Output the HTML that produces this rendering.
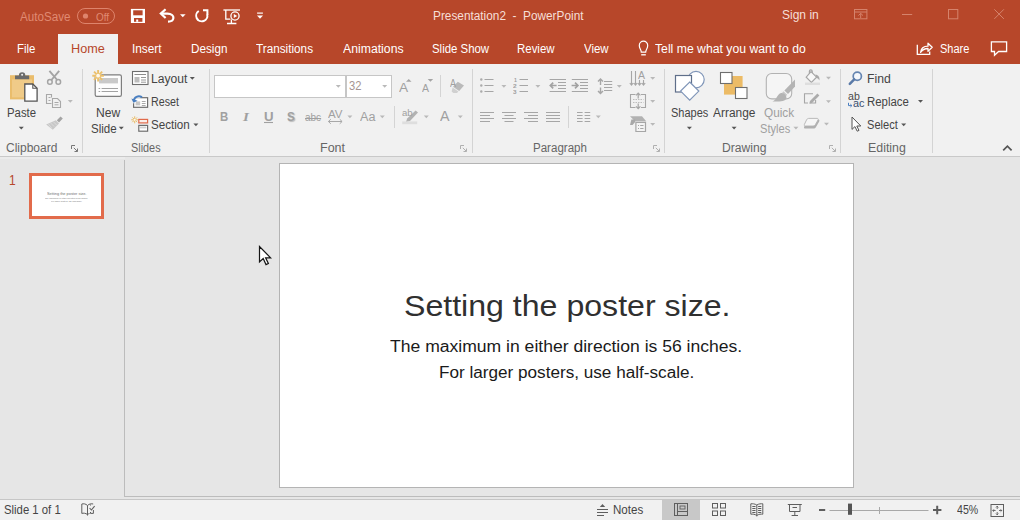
<!DOCTYPE html>
<html lang="en">
<head>
<meta charset="utf-8">
<title>Presentation2 - PowerPoint</title>
<style>
*{box-sizing:border-box;margin:0;padding:0}
html,body{width:1020px;height:520px;overflow:hidden;background:#e6e6e6}
body{position:relative;font-family:"Liberation Sans",sans-serif;font-size:12px;color:#444;line-height:1}
.abs,.t,svg{position:absolute}
svg{overflow:visible}
.t{white-space:nowrap;display:block}
#titlebar{position:absolute;left:0;top:0;width:1020px;height:64px;background:#b7472a}
#hometab{position:absolute;left:58px;top:34px;width:60px;height:30px;background:#f1f1f1}
#ribbon{position:absolute;left:0;top:64px;width:1020px;height:93px;background:#f1f1f1;border-bottom:1px solid #c9c9c9}
.w{color:#fff}
.ttl{color:#f6dfd8}
.dim{color:#e08a72}
.hm{color:#b7472a}
.g{color:#a0a0a0}
.g32{color:#a59492}
.rp{color:#4a4a4a}
.rp2{color:#3a4f6e}
.lbl{color:#666}
.st{color:#303030}
.th{color:#707070}
.sb{color:#1a1a1a}
.vsep{position:absolute;width:1px;background:#d4d4d4}
.arr{position:absolute;width:0;height:0;border-left:3px solid transparent;border-right:3px solid transparent;border-top:3px solid #666}
.arr.ga{border-top-color:#b9b9b9}
.box{position:absolute;background:#fff;border:1px solid #c6c6c6}
#leftpanel{position:absolute;left:0;top:160px;width:125px;height:337px;background:#e6e6e6;border-right:1px solid #bcbcbc}
#work{position:absolute;left:125px;top:157px;width:895px;height:340px;background:#e6e6e6;border-bottom:1px solid #bcbcbc}
#slide{position:absolute;left:279px;top:163px;width:575px;height:325px;background:#fff;border:1px solid #b4b4b4}
#thumb{position:absolute;left:29px;top:173px;width:75px;height:46px;background:#fff;border:3px solid #e26b4b}
#status{position:absolute;left:0;top:499px;width:1020px;height:21px;background:#f1f1f1;border-top:1px solid #c6c6c6}
#viewsel{position:absolute;left:662px;top:500px;width:38px;height:20px;background:#c8c8c8}
</style>
</head>
<body>
<div id="titlebar"></div>
<div id="hometab"></div>
<div id="ribbon"></div>
<div class="abs" style="left:0;top:157px;width:1020px;height:2px;background:#ebebeb"></div>
<div id="leftpanel"></div>
<div id="work"></div>
<div id="slide"></div>
<div id="thumb"></div>
<div id="status"></div>
<div id="viewsel"></div>
<!-- separators & boxes -->
<div class="vsep" style="left:82px;top:69px;height:84px"></div>
<div class="vsep" style="left:209px;top:69px;height:84px"></div>
<div class="vsep" style="left:472px;top:69px;height:84px"></div>
<div class="vsep" style="left:664px;top:69px;height:84px"></div>
<div class="vsep" style="left:840px;top:69px;height:84px"></div>
<div class="vsep" style="left:932px;top:69px;height:84px"></div>
<div class="vsep" style="left:440px;top:75px;height:22px"></div>
<div class="vsep" style="left:394px;top:106px;height:22px"></div>
<div class="vsep" style="left:568px;top:106px;height:22px"></div>
<div class="box" style="left:214px;top:75px;width:132px;height:23px"></div>
<div class="box" style="left:346px;top:75px;width:46px;height:23px"></div>

<svg id="ic" width="1020" height="520" viewBox="0 0 1020 520" style="left:0;top:0" fill="none" stroke-linecap="butt">
<!-- ===== title bar ===== -->
<g stroke="#de846c" stroke-width="1">
<rect x="77.5" y="8.5" width="37" height="15" rx="7.5"/>
<circle cx="85.5" cy="16" r="2.6" fill="#de846c" stroke="none"/>
</g>
<!-- save -->
<path fill="#fff" d="M130.9,8.900h14.100v14.100h-14.100z"/>
<rect x="133.2" y="10.300" width="9.400" height="5" fill="#b7472a"/>
<rect x="134" y="18" width="8.400" height="3.800" fill="#b7472a"/>
<rect x="136.2" y="19.500" width="2" height="2.300" fill="#fff"/>
<!-- undo -->
<g stroke="#fff" stroke-width="2.200" stroke-linejoin="miter">
<path d="M165.6,9.200 L160.800,13.600 L165.600,18"/>
<path d="M161.4,13.600 H167.400 C171.600,13.600 173.600,15.800 173.400,18 C173.200,20.400 171,21.600 168,21.600"/>
</g>
<path fill="#fff" d="M180,14.2h5.6l-2.8,3z"/>
<!-- repeat -->
<g stroke="#fff" stroke-width="2">
<path d="M198.800,11 A5.600,5.600 0 1 0 207.200,14.400"/>
<path d="M203,10.300 H207.400 V15" stroke-linejoin="miter"/>
</g>
<!-- start presentation -->
<g stroke="#fff" stroke-width="1.3">
<path d="M223.4,10H240"/>
<path d="M225.8,10V19.2H230.4"/>
<circle cx="235" cy="16" r="4.1"/>
<path d="M231.4,19.4V23.2M227,23.5H236.4"/>
<path d="M233.8,13.9L237.2,16L233.8,18.1Z" fill="#fff" stroke="none"/>
</g>
<!-- customize qat -->
<path d="M257.1,13.1H262.9" stroke="#fff" stroke-width="1.2"/>
<path fill="#fff" d="M257,15.5h6l-3,3.3z"/>
<!-- window controls -->
<g stroke="#d5836c" stroke-width="1">
<rect x="854.5" y="9.500" width="12.400" height="9.300"/>
<path d="M854.5,12H866.900M860.700,18V13.400M858.400,15.600L860.700,13.300L863,15.600"/>
<path d="M902,14.500H912.200"/>
<rect x="948.5" y="9.500" width="9.300" height="9.300"/>
<path d="M994.3,9.300L1003.900,18.900M1003.900,9.300L994.300,18.900"/>
</g>
<!-- lightbulb -->
<g stroke="#fff" stroke-width="1.2">
<path d="M641.3,52.2 C641.3,49.600 639.300,48.600 639.300,45.400 A4.200,4.200 0 0 1 647.700,45.400 C647.700,48.600 645.700,49.600 645.700,52.200 Z"/>
<path d="M641.2,54.800H645.800" stroke-width="1.300"/>
</g>
<!-- share -->
<g stroke="#fff" stroke-width="1.3">
<path d="M917.3,44.800V54.400H929.700V51.400"/>
<path d="M920.6,52.400 C921,48.200 923.800,46.200 928,46.200 V43.200 L932.200,47.300 L928,51.400 V48.500 C925,48.500 922.600,49.300 920.600,52.400Z" stroke-linejoin="round" transform="translate(0,0)"/>
</g>
<!-- comment -->
<path d="M991.4,41.800H1006.600V51.500H998.600L994.500,55.200V51.500H991.400Z" stroke="#fff" stroke-width="1.300"/>
<!-- ===== ribbon: clipboard ===== -->
<!-- paste -->
<path fill="#eabd6c" d="M10,75.2h24v24.2h-24z"/>
<path fill="#f0cb88" d="M12,79.4h20v18h-20z"/>
<path fill="#6b6b6b" d="M15,79.200v-3.800h3.900a3.200,3.200 0 0 1 6.400,0h3.900v3.800z"/>
<circle cx="22.100" cy="74.700" r="1" fill="#f1f1f1"/>
<path fill="#fff" stroke="#555" stroke-width="1.3" d="M24.8,84h8l4.3,4.3v12.8h-12.3z"/>
<path stroke="#555" stroke-width="1.1" d="M32.8,84v4.3h4.3"/>
<path fill="#555" d="M18.8,126.8h5l-2.5,2.8z"/>
<!-- cut -->
<g stroke="#a4a4a4" stroke-width="1.5">
<path d="M49.4,70.8L57.2,80M59.2,70.8L51.4,80" stroke-width="1.9"/>
<circle cx="49.9" cy="81.9" r="2.3"/><circle cx="58.3" cy="81.9" r="2.3"/>
</g>
<!-- copy -->
<g stroke="#a8a8a8" stroke-width="1.1">
<path d="M51.5,97.5V94.5H46.5V103.5H51.5" />
<path d="M48.5,97.5H50.5M48.5,100.5H50.5" stroke-width="1"/>
<path fill="#f1f1f1" d="M52.5,98.5h5l3,3v6h-8z"/>
<path d="M54.5,102.5H58.5M54.5,104.8H58.5" stroke-width="1"/>
</g>
<path fill="#b9b9b9" d="M67.8,100.0h5l-2.5,2.8z"/>
<!-- format painter -->
<path d="M60.6,116.400l2.200,2.200l-3.800,3.800l-2.200,-2.200z" fill="#a4a4a4"/>
<path d="M55.8,120.200l3.200,3.200l-6.200,6.400l-6.600,-5.400z" fill="#c8c8c8"/>
<path d="M53.4,121.800l3.200,3.200M50.600,123l3.600,3.600M48.400,124l3.400,4.200" stroke="#dedede" stroke-width="0.800"/>
<!-- launcher clipboard -->
<g id="ln1" stroke="#777" stroke-width="1">
<path d="M71.5,149V145.5H75"/>
<path d="M73.8,147.8L77.3,151.3M77.5,148.5V151.5H74.5"/>
</g>
<!-- new slide -->
<rect x="95.2" y="74.900" width="26.200" height="21.400" rx="1.600" fill="#fdfdfd" stroke="#7e7e7e" stroke-width="1.200"/>
<rect x="99" y="78" width="19" height="5.400" fill="#c9c9c9"/>
<path d="M98.6,88.500H100.200M101.600,88.500H118M98.600,91.500H100.200M101.600,91.500H118" stroke="#a2a2a2" stroke-width="1"/>
<circle cx="98.1" cy="75.700" r="3.400" fill="#f1f1f1"/>
<g stroke="#ebc06c" stroke-width="1.900">
<path d="M98.1,69.900V81.500M92.300,75.700H103.900M94,71.600L102.200,79.800M102.200,71.600L94,79.800"/>
</g>
<circle cx="98.1" cy="75.700" r="1.900" fill="#fdf8ec"/>
<path fill="#555" d="M118.8,126.800h5l-2.500,2.800z"/>
<!-- layout -->
<rect x="132.5" y="71.5" width="15.5" height="13" fill="#fff" stroke="#6e6e6e" stroke-width="1.1"/>
<path d="M134.5,74.5H146" stroke="#8c8c8c"/>
<rect x="134.5" y="77" width="5" height="5.5" fill="#bdbdbd"/>
<path d="M141,77.5H146M141,80H146M141,82.2H146" stroke="#8c8c8c" stroke-width=".9"/>
<path fill="#555" d="M189.8,77.0h5l-2.5,2.8z"/>
<!-- reset -->
<rect x="133.6" y="97.700" width="14" height="9.600" fill="#fff" stroke="#6e6e6e" stroke-width="1.200"/>
<rect x="135.6" y="101.400" width="4.600" height="4" fill="#c6c6c6"/>
<path d="M141.8,101.500H145.600M141.800,103.500H145.600M141.800,105.500H145.600" stroke="#a0a0a0" stroke-width=".9"/>
<path d="M131,95h9.500v3.600h-4.500v4.600h-5z" fill="#f1f1f1"/>
<path d="M133.800,100.800C134,97 138.200,95.200 142,97.200" stroke="#4a7fc0" stroke-width="2"/>
<path d="M131.400,98.600L133.400,102.800L137.600,100.800Z" fill="#4a7fc0"/>
<!-- section -->
<g stroke="#e9bc66" stroke-width="1"><path d="M134.700,116.300V123.300M131.200,119.800H138.200M132.300,117.400L137.100,122.200M137.100,117.400L132.300,122.200"/></g><circle cx="134.700" cy="119.800" r="1.100" fill="#fdf8ec"/>
<rect x="138.8" y="119.400" width="8.800" height="3.500" stroke="#e06a4a" stroke-width="1.200" fill="#fbeee9"/>
<rect x="138.8" y="125.400" width="8.800" height="5.800" stroke="#6e6e6e" stroke-width="1.200" fill="#fff"/><rect x="140" y="126.600" width="6.400" height="1.800" fill="#cfcfcf"/>
<path fill="#555" d="M193.400,123.400h5l-2.500,2.800z"/>
<!-- ===== font group ===== -->
<path fill="#b9b9b9" d="M335.8,85.0h5l-2.5,2.8z"/>
<path fill="#b9b9b9" d="M382.2,85.0h5l-2.5,2.8z"/>
<path fill="#a4a4a4" d="M406,81.700l2.750,-2.800l2.750,2.800z"/>
<path fill="#a4a4a4" d="M427.700,79l2.750,2.800l2.750,-2.800z"/>
<!-- clear formatting -->
<path d="M457.8,81.700l6.200,3.800l-4.800,5.600l-6.200,-4.300z" fill="#bababa"/>
<path d="M452.6,87.600l5.800,4l-1.400,1.400h-3.600l-1.800,-1.400z" fill="#d0d0d0"/>
<!-- U underline, AV arrow -->
<path d="M264,122.5H273" stroke="#a0a0a0" stroke-width="1.1"/>
<path d="M328.5,121.5H342M330.8,119.2L328.4,121.5L330.8,123.8M339.7,119.2L342.1,121.5L339.7,123.8" stroke="#a8a8a8" stroke-width="1"/>
<path fill="#b9b9b9" d="M347.4,115.5h5l-2.5,2.8z"/>
<path fill="#b9b9b9" d="M379.8,115.5h5l-2.5,2.8z"/>
<!-- highlight -->
<path d="M415.6,110.600l2.400,2l-8,8.400l-4,1l1.200,-3.600z" fill="#b2b2b2"/>
<rect x="402.2" y="121.400" width="15" height="2.800" fill="#dedede"/>
<path fill="#b9b9b9" d="M423.8,115.5h5l-2.5,2.8z"/>
<path fill="#b9b9b9" d="M457.8,115.5h5l-2.5,2.8z"/>
<g stroke="#b0b0b0" stroke-width="1">
<path d="M460.5,149V145.5H464"/>
<path d="M462.8,147.8L466.3,151.3M466.5,148.5V151.5H463.5"/>
</g>
<!-- ===== paragraph group ===== -->
<g stroke="#a6a6a6" stroke-width="1.1">
<!-- bullets -->
<path d="M484.5,79.5H493.5M484.5,85.5H493.5M484.5,91.5H493.5"/>
<g fill="#ababab" stroke="none"><circle cx="481.3" cy="79.5" r="1.2"/><circle cx="481.3" cy="85.5" r="1.2"/><circle cx="481.3" cy="91.5" r="1.2"/></g>
<!-- numbering lines -->
<path d="M519.5,79.5H528M519.5,85.5H528M519.5,91.5H528"/>
<!-- decrease indent -->
<path d="M549.6,79.5H566M549.6,91.5H566M558,82.5H566M558,85.5H566M558,88.5H566"/>
<path d="M550.4,85.5H556.6M553.2,82.600L550.300,85.500L553.200,88.400" stroke-width="1.7" stroke="#a2a2a2"/>
<!-- increase indent -->
<path d="M571.8,79.5H588M571.8,91.5H588M580,82.5H588M580,85.5H588M580,88.5H588"/>
<path d="M571.6,85.500H577.800M575,82.600L577.900,85.500L575,88.400" stroke-width="1.7" stroke="#a2a2a2"/>
<!-- line spacing -->
<path d="M604,81.500H612.200M604,84.500H612.200M604,87.500H612.200M604,90.500H612.200"/>
<path d="M600.5,79V85M600.500,87.600V93.600M598,81.600L600.500,79L603,81.600M598,91L600.500,93.600L603,91" stroke-width="1.400"/>
<!-- align rows -->
<path d="M480,112.5H494M480,115.5H490M480,118.5H494M480,121.5H490"/>
<path d="M502,112.5H516M504.5,115.5H513.5M502,118.5H516M504.5,121.5H513.5"/>
<path d="M524,112.5H538M528,115.5H538M524,118.5H538M528,121.5H538"/>
<path d="M546,112.5H560M546,115.5H560M546,118.5H560M546,121.5H560"/>
<!-- columns -->
<path d="M577,112.5H582.6M577,115.5H582.6M577,118.5H582.6M577,121.5H582.6M584.6,112.5H590.2M584.6,115.5H590.2M584.6,118.5H590.2M584.6,121.5H590.2"/>
<!-- text direction -->
<path d="M631.5,71V85M635.5,71V85M629.8,83L631.5,85.2L633.2,83M633.8,83L635.5,85.2L637.2,83"/>
<path d="M639.5,80V85M643.5,80V85M637.8,83L639.5,85.2L641.2,83M641.8,83L643.5,85.2L645.2,83"/>
<!-- align text -->
<path d="M635.5,94.500H630.500V107.500H635.500M641,94.500H645.500V107.500H641"/>
<path d="M638.2,93.200V98.400M636,95.400L638.200,93.200L640.400,95.400M638.200,103.400V108.600M636,106.400L638.200,108.600L640.400,106.400" stroke-width="1.200"/>
<path d="M633,99.500H643.500M633,102.500H643.500" stroke-dasharray="1.500 1" stroke="#bdbdbd"/>
<!-- smartart -->
<path d="M635.9,122.300H645.500V131.500H635.900Z" fill="#f4f4f4" stroke-width="1.200"/>
<path d="M638,125.500H639M640.200,125.500H643.500M638,128.500H639M640.200,128.500H643.500" />
</g>
<path d="M630,116.200h12l4.200,5h-11.200z" fill="#b2b2b2"/>
<path d="M631.4,119.500h3.800v2.400l-2.600,3.200h-2.600z" fill="#a8a8a8"/>
<g fill="#b9b9b9">
<path d="M501.4,85.0h5l-2.5,2.8z"/>
<path d="M535.4,85.0h5l-2.5,2.8z"/>
<path d="M616.8,85.0h5l-2.5,2.8z"/>
<path d="M595.8,115.5h5l-2.5,2.8z"/>
<path d="M650.2,77.0h5l-2.5,2.8z"/>
<path d="M650.2,100.0h5l-2.5,2.8z"/>
<path d="M650.2,123.0h5l-2.5,2.8z"/>
</g>
<g stroke="#b0b0b0" stroke-width="1">
<path d="M653.5,149V145.5H657"/>
<path d="M655.8,147.8L659.3,151.3M659.5,148.5V151.5H656.5"/>
</g>
<!-- ===== drawing group ===== -->
<circle cx="696" cy="79.6" r="8.2" fill="#fff" stroke="#7f95b8" stroke-width="1.2"/>
<rect x="675.5" y="75.5" width="16" height="16.5" fill="#fff" stroke="#5f6f8a" stroke-width="1.2"/>
<path d="M689.7,82L698.8,91.1L689.7,100.2L680.6,91.1Z" fill="#fff" stroke="#7f95b8" stroke-width="1.2"/>
<path fill="#555" d="M686.9,126.8h5l-2.5,2.8z"/>
<!-- arrange -->
<rect x="724" y="76" width="18.6" height="18.6" fill="#ecbb66"/>
<rect x="720.5" y="72.5" width="11.5" height="11" fill="#fff" stroke="#6e6e6e" stroke-width="1.1"/>
<rect x="735.5" y="87.5" width="11.5" height="11" fill="#fff" stroke="#6e6e6e" stroke-width="1.1"/>
<path fill="#555" d="M731.6,126.8h5l-2.5,2.8z"/>
<!-- quick styles -->
<rect x="766.3" y="73.5" width="25.4" height="25.4" rx="5.5" fill="#f5f5f5" stroke="#b2b2b2" stroke-width="1.1"/>
<path d="M782,90l6,6l-4,5h-9z" fill="#f1f1f1"/>
<path d="M795,79.6v7l-7,7.4l-3.6,-3.6z" fill="#b4b4b4"/>
<path d="M783.6,91.2l3.6,3.6l-1.6,1.8l-3.6,-3.6z" fill="#c9c9c9"/>
<path d="M781.2,93C784,92.600 787,95.800 786.400,98.400C785.600,101.200 779,101.700 772.400,101.400C776.800,100 777,94 781.200,93z" fill="#b4b4b4"/>
<path fill="#b9b9b9" d="M793.4,126.8h5l-2.5,2.8z"/>
<!-- shape fill -->
<g stroke="#a6a6a6" stroke-width="1.2">
<path d="M811,71.6L816.6,77.2L811.4,82.4L806.2,77.2Z" fill="#f8f8f8"/>
<path d="M809.4,73.6V71.2a1.4,1.4 0 0 1 2.8,0V73"/>
</g>
<path d="M815.4,74.6c3,0.6 4.6,2.8 4,6c-0.8,-1.6-1.6,-2.4-3,-2.8z" fill="#a9a9a9"/>
<rect x="805" y="82.6" width="15" height="2.4" fill="#dedede"/>
<!-- shape outline -->
<g stroke="#a6a6a6" stroke-width="1.1">
<path d="M813,93.8H804.5V103H808M810,103H815.6V100"/>
</g>
<path d="M817.4,93.6l2,2l-7.400,7.400l-2.800,0.800l0.800,-2.800z" fill="#ababab"/>
<!-- shape effects -->
<path d="M809.4,119.6h8.600c1.200,0 1.800,0.800 1.200,1.800l-3.200,5.600c-0.600,1-1.400,1.600-2.600,1.600h-8c-1.200,0-1.800-0.800-1.200-1.800l2.800,-5.600c0.600-1 1.200,-1.600 2.400,-1.600z" fill="#b0b0b0"/>
<path d="M808.600,118.4h8.400c1,0 1.600,0.600 1,1.600l-2.600,4.600c-0.400,0.800-1.200,1.400-2.200,1.400h-7.800c-1,0-1.400-0.600-1-1.600l2.200,-4.600c0.400-0.800 1,-1.400 2,-1.400z" fill="#f6f6f6" stroke="#b4b4b4" stroke-width="0.9"/>
<g fill="#b9b9b9">
<path d="M826,76.8h5l-2.500,2.800z"/>
<path d="M826,100.200h5l-2.500,2.800z"/>
<path d="M824,122.800h5l-2.500,2.800z"/>
</g>
<g stroke="#b0b0b0" stroke-width="1">
<path d="M829.5,149V145.5H833"/>
<path d="M831.8,147.800L835.300,151.300M835.500,148.500V151.500H832.500"/>
</g>
<!-- ===== editing ===== -->
<circle cx="857.3" cy="76.2" r="4.1" stroke="#6484b0" stroke-width="1.7" fill="#f4f7fb"/>
<path d="M854.2,79.4L849.8,83.8" stroke="#5a7aa8" stroke-width="2.5" stroke-linecap="round"/>
<path d="M848.5,102.800V105.600H851.800M850.400,104.200L851.900,105.600L850.400,107" stroke="#4a7fc0" stroke-width="1"/>
<path d="M852,117V129.4L854.9,126.6L857.2,131.2L859,130.4L856.8,126H860.8Z" fill="#fff" stroke="#555" stroke-width="1" stroke-linejoin="miter"/>
<path fill="#555" d="M918.0,100.0h5l-2.5,2.8z"/>
<path fill="#555" d="M901.200,123.400h5l-2.500,2.800z"/>
<path d="M1003.2,150.4L1007.4,146.2L1011.6,150.4" stroke="#555" stroke-width="1.7"/>
<!-- ===== workspace cursor ===== -->
<path d="M259.5,246.5V262L263.2,258.6L266,264.6L268.4,263.5L265.6,257.8H270.6Z" fill="#fff" stroke="#151515" stroke-width="1.200" stroke-linejoin="miter"/>
<!-- ===== status bar ===== -->
<g stroke="#5e5e5e" stroke-width="1">
<!-- spell book -->
<path d="M87.5,505.5V515.5M87.5,505.5C85.6,503.6 83.4,503.6 81.8,504V513.4C83.4,513 85.6,513 87.5,514.6"/>
<path d="M87.5,505.5C89.4,503.6 91.6,503.6 93.2,504"/>
<path d="M87.5,514.6C88,514 89,513.6 89.5,513.5"/>
<path d="M89.6,508L91.4,510L94.6,506.2" stroke-width="1.1"/>
<path d="M90.5,505.5V504.5M90.5,512V513.4H93.4V510"/>
<!-- notes -->
<path d="M597,509.5H608M597,512.5H608M597,515.5H604"/>
<path d="M599.8,507L602.5,504L605.2,507Z" fill="#5e5e5e" stroke="none"/>
<!-- normal view -->
<rect x="674.5" y="503.5" width="13" height="12"/>
<path d="M677.5,503.5V515.5M677.5,511.5H687.5"/>
<rect x="680" y="506" width="5" height="3" stroke-width=".9"/>
<!-- sorter -->
<rect x="712.5" y="503.5" width="5" height="4.5"/><rect x="720.5" y="503.5" width="5" height="4.5"/>
<rect x="712.5" y="511" width="5" height="4.5"/><rect x="720.5" y="511" width="5" height="4.5"/>
<!-- reading view -->
<path d="M756.8,505V516.4M756.8,505C754.8,503.8 752.6,503.6 750.8,503.8V514.2C752.6,514 754.8,514.2 756.8,515.4C758.8,514.2 761,514 762.8,514.2V503.8C761,503.6 758.8,503.8 756.8,505"/>
<path d="M752.3,506.500H755.500M752.300,508.500H755.500M752.300,510.500H755.500M752.300,512.500H755.500M758.100,506.500H761.300M758.100,508.500H761.300M758.100,510.500H761.300M758.100,512.500H761.300" stroke-width="1"/>
<!-- slideshow -->
<path d="M787.8,504.5H801.8M789.5,504.5V511.5H800V504.5M794.8,511.5V515M791.6,515.5H798"/>
<path d="M792.5,507.5H797" />
<!-- fit -->
<rect x="991" y="504.5" width="12.5" height="12"/>
<path d="M997.2,506V509M996,507.4L997.2,506.2L998.4,507.4M997.2,515V512M996,513.6L997.2,514.8L998.4,513.6M992.6,510.5H995.6M994,509.3L992.8,510.5L994,511.7M1002,510.5H999M1000.6,509.3L1001.8,510.5L1000.6,511.7" stroke-width=".9"/>
</g>
<!-- zoom -->
<path d="M819,510H825.2" stroke="#5e5e5e" stroke-width="2"/>
<path d="M829.5,510.5H928.5" stroke="#a8a8a8" stroke-width="1"/>
<path d="M879.5,507V514" stroke="#a8a8a8" stroke-width="1"/>
<rect x="848" y="503.6" width="4" height="11.2" fill="#555"/>
<path d="M933,510H941.4M937.2,505.8V514.2" stroke="#5e5e5e" stroke-width="2"/>
</svg>

<span class="t dim" style="left:20.00px;top:9.50px;font-size:12px;line-height:14px;height:14px;transform:scaleX(0.9699);transform-origin:0 0;">AutoSave</span>
<span class="t dim" style="left:95.85px;top:10.50px;font-size:11px;line-height:12px;height:12px;transform:scaleX(0.9047);transform-origin:0 0;">Off</span>
<span class="t ttl" style="left:432.58px;top:9.00px;font-size:12px;line-height:14px;height:14px;transform:scaleX(0.9853);transform-origin:0 0;white-space:pre;">Presentation2  -  PowerPoint</span>
<span class="t ttl" style="left:781.80px;top:8.20px;font-size:12px;line-height:14px;height:14px;transform:scaleX(1.0013);transform-origin:0 0;">Sign in</span>
<span class="t w" style="left:17.11px;top:42.00px;font-size:12px;line-height:14px;height:14px;transform:scaleX(0.9491);transform-origin:0 0;">File</span>
<span class="t hm" style="left:70.71px;top:42.00px;font-size:12px;line-height:14px;height:14px;transform:scaleX(1.0560);transform-origin:0 0;">Home</span>
<span class="t w" style="left:132.25px;top:42.00px;font-size:12px;line-height:14px;height:14px;transform:scaleX(0.9839);transform-origin:0 0;">Insert</span>
<span class="t w" style="left:190.79px;top:42.00px;font-size:12px;line-height:14px;height:14px;transform:scaleX(0.9753);transform-origin:0 0;">Design</span>
<span class="t w" style="left:256.06px;top:42.00px;font-size:12px;line-height:14px;height:14px;transform:scaleX(0.9789);transform-origin:0 0;">Transitions</span>
<span class="t w" style="left:342.50px;top:42.00px;font-size:12px;line-height:14px;height:14px;transform:scaleX(1.0206);transform-origin:0 0;">Animations</span>
<span class="t w" style="left:431.82px;top:42.00px;font-size:12px;line-height:14px;height:14px;transform:scaleX(0.9510);transform-origin:0 0;">Slide Show</span>
<span class="t w" style="left:517.41px;top:42.00px;font-size:12px;line-height:14px;height:14px;transform:scaleX(0.9534);transform-origin:0 0;">Review</span>
<span class="t w" style="left:584.30px;top:42.00px;font-size:12px;line-height:14px;height:14px;transform:scaleX(0.9545);transform-origin:0 0;">View</span>
<span class="t w" style="left:655.25px;top:42.00px;font-size:12px;line-height:14px;height:14px;transform:scaleX(1.0180);transform-origin:0 0;">Tell me what you want to do</span>
<span class="t w" style="left:940.04px;top:42.00px;font-size:12px;line-height:14px;height:14px;transform:scaleX(0.9183);transform-origin:0 0;">Share</span>
<span class="t" style="left:7.41px;top:105.70px;font-size:12px;line-height:14px;height:14px;transform:scaleX(0.9466);transform-origin:0 0;">Paste</span>
<span class="t lbl" style="left:6.14px;top:141.00px;font-size:12px;line-height:14px;height:14px;transform:scaleX(0.9987);transform-origin:0 0;">Clipboard</span>
<span class="t" style="left:95.76px;top:105.70px;font-size:12px;line-height:14px;height:14px;transform:scaleX(1.0064);transform-origin:0 0;">New</span>
<span class="t" style="left:90.82px;top:121.70px;font-size:12px;line-height:14px;height:14px;transform:scaleX(0.9612);transform-origin:0 0;">Slide</span>
<span class="t" style="left:150.75px;top:72.00px;font-size:12px;line-height:14px;height:14px;transform:scaleX(1.0083);transform-origin:0 0;">Layout</span>
<span class="t" style="left:150.87px;top:95.00px;font-size:12px;line-height:14px;height:14px;transform:scaleX(0.8903);transform-origin:0 0;">Reset</span>
<span class="t" style="left:151.22px;top:118.00px;font-size:12px;line-height:14px;height:14px;transform:scaleX(0.9693);transform-origin:0 0;">Section</span>
<span class="t lbl" style="left:131.05px;top:141.00px;font-size:12px;line-height:14px;height:14px;transform:scaleX(0.9054);transform-origin:0 0;">Slides</span>
<span class="t lbl" style="left:319.52px;top:141.00px;font-size:12px;line-height:14px;height:14px;transform:scaleX(1.0439);transform-origin:0 0;">Font</span>
<span class="t g32" style="left:349.09px;top:79.00px;font-size:12px;line-height:14px;height:14px;transform:scaleX(0.9303);transform-origin:0 0;">32</span>
<span class="t lbl" style="left:532.60px;top:141.00px;font-size:12px;line-height:14px;height:14px;transform:scaleX(0.9620);transform-origin:0 0;">Paragraph</span>
<span class="t" style="left:670.74px;top:105.70px;font-size:12px;line-height:14px;height:14px;transform:scaleX(0.9165);transform-origin:0 0;">Shapes</span>
<span class="t" style="left:713.00px;top:105.70px;font-size:12px;line-height:14px;height:14px;transform:scaleX(0.9928);transform-origin:0 0;">Arrange</span>
<span class="t g" style="left:764.45px;top:105.70px;font-size:12px;line-height:14px;height:14px;transform:scaleX(0.9810);transform-origin:0 0;">Quick</span>
<span class="t g" style="left:760.14px;top:121.70px;font-size:12px;line-height:14px;height:14px;transform:scaleX(0.9244);transform-origin:0 0;">Styles</span>
<span class="t lbl" style="left:721.75px;top:141.00px;font-size:12px;line-height:14px;height:14px;transform:scaleX(1.0085);transform-origin:0 0;">Drawing</span>
<span class="t" style="left:866.54px;top:72.00px;font-size:12px;line-height:14px;height:14px;transform:scaleX(1.0198);transform-origin:0 0;">Find</span>
<span class="t" style="left:866.61px;top:95.00px;font-size:12px;line-height:14px;height:14px;transform:scaleX(0.9506);transform-origin:0 0;">Replace</span>
<span class="t" style="left:867.04px;top:118.00px;font-size:12px;line-height:14px;height:14px;transform:scaleX(0.9216);transform-origin:0 0;">Select</span>
<span class="t lbl" style="left:867.53px;top:141.00px;font-size:12px;line-height:14px;height:14px;transform:scaleX(1.0309);transform-origin:0 0;">Editing</span>
<span class="t g" style="left:220.29px;top:109.60px;font-size:12px;line-height:14px;height:14px;transform:scaleX(0.9492);transform-origin:0 0;font-weight:700;">B</span>
<span class="t g" style="left:242.95px;top:109.60px;font-size:12.5px;line-height:14px;height:14px;transform:scaleX(1.2093);transform-origin:0 0;font-weight:700;font-style:italic;font-family:'Liberation Serif',serif;">I</span>
<span class="t g" style="left:263.74px;top:109.60px;font-size:12px;line-height:14px;height:14px;transform:scaleX(1.1034);transform-origin:0 0;font-weight:700;">U</span>
<span class="t g" style="left:287.20px;top:109.60px;font-size:12px;line-height:14px;height:14px;transform:scaleX(0.9655);transform-origin:0 0;font-weight:700;text-shadow:1px 1px 1px #bbb;">S</span>
<span class="t g" style="left:305.12px;top:111.60px;font-size:10px;line-height:11px;height:11px;transform:scaleX(1.0001);transform-origin:0 0;text-decoration:line-through;">abc</span>
<span class="t g" style="left:328.00px;top:107.50px;font-size:11px;line-height:12px;height:12px;transform:scaleX(1.0482);transform-origin:0 0;">AV</span>
<span class="t g" style="left:360.00px;top:109.60px;font-size:12px;line-height:14px;height:14px;transform:scaleX(1.0482);transform-origin:0 0;">Aa</span>
<span class="t g" style="left:398.60px;top:79.70px;font-size:13.5px;line-height:15px;height:15px;transform:scaleX(1.0111);transform-origin:0 0;">A</span>
<span class="t g" style="left:421.60px;top:81.70px;font-size:10.8px;line-height:12px;height:12px;transform:scaleX(0.9739);transform-origin:0 0;">A</span>
<span class="t g" style="left:439.80px;top:108.40px;font-size:14.5px;line-height:16px;height:16px;transform:scaleX(0.9806);transform-origin:0 0;">A</span>
<span class="t hm" style="left:9.49px;top:172.30px;font-size:14px;line-height:16px;height:16px;transform:scaleX(0.8577);transform-origin:0 0;">1</span>
<span class="t st" style="left:404.00px;top:289.40px;font-size:30px;line-height:33px;height:33px;transform:scaleX(1.0699);transform-origin:0 0;">Setting the poster size.</span>
<span class="t sb" style="left:390.26px;top:337.60px;font-size:16px;line-height:17px;height:17px;transform:scaleX(1.0972);transform-origin:0 0;">The maximum in either direction is 56 inches.</span>
<span class="t sb" style="left:439.19px;top:363.60px;font-size:16px;line-height:17px;height:17px;transform:scaleX(1.0711);transform-origin:0 0;">For larger posters, use half-scale.</span>
<span class="t th" style="left:46.87px;top:192.00px;font-size:3.6px;line-height:4px;height:4px;transform:scaleX(1.0780);transform-origin:0 0;">Setting the poster size.</span>
<span class="t th" style="left:45.00px;top:197.00px;font-size:2.2px;line-height:2px;height:2px;transform:scaleX(0.9784);transform-origin:0 0;">The maximum in either direction is 56 inches.</span>
<span class="t th" style="left:50.88px;top:200.00px;font-size:2.2px;line-height:2px;height:2px;transform:scaleX(0.9551);transform-origin:0 0;">For larger posters, use half-scale.</span>
<span class="t" style="left:3.83px;top:502.80px;font-size:12px;line-height:14px;height:14px;transform:scaleX(0.9442);transform-origin:0 0;">Slide 1 of 1</span>
<span class="t" style="left:612.59px;top:502.80px;font-size:12px;line-height:14px;height:14px;transform:scaleX(0.9655);transform-origin:0 0;">Notes</span>
<span class="t" style="left:956.78px;top:502.60px;font-size:12px;line-height:14px;height:14px;transform:scaleX(0.8823);transform-origin:0 0;">45%</span>
<span class="t g" style="left:513.70px;top:76.60px;font-size:5.5px;line-height:6px;height:6px;transform:scaleX(0.9524);transform-origin:0 0;font-weight:700;">1</span>
<span class="t g" style="left:513.38px;top:82.60px;font-size:5.5px;line-height:6px;height:6px;transform:scaleX(1.1907);transform-origin:0 0;font-weight:700;">2</span>
<span class="t g" style="left:513.45px;top:88.60px;font-size:5.5px;line-height:6px;height:6px;transform:scaleX(1.1636);transform-origin:0 0;font-weight:700;">3</span>
<span class="t g" style="left:401.80px;top:108.20px;font-size:9px;line-height:10px;height:10px;transform:scaleX(1.0625);transform-origin:0 0;">ab</span>
<span class="t g" style="left:450.20px;top:76.80px;font-size:10.5px;line-height:12px;height:12px;transform:scaleX(0.8571);transform-origin:0 0;">A</span>
<span class="t g" style="left:638.00px;top:70.00px;font-size:10px;line-height:11px;height:11px;transform:scaleX(1.0467);transform-origin:0 0;">A</span>
<span class="t rp" style="left:847.60px;top:91.40px;font-size:10px;line-height:11px;height:11px;transform:scaleX(1.0603);transform-origin:0 0;">ab</span>
<span class="t rp2" style="left:852.79px;top:98.20px;font-size:10px;line-height:11px;height:11px;transform:scaleX(1.0869);transform-origin:0 0;">ac</span>
</body>
</html>
